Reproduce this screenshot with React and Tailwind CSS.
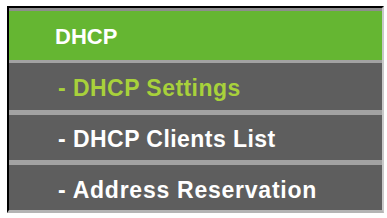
export default function App() {
  const font = { fontFamily: '"Liberation Sans", Arial, sans-serif' };
  return (
    <div className="w-[387px] h-[218px] bg-white pt-[6px] pl-[7px]">
      <div
        className="w-[377px] border-t-2 border-l-2 border-t-black border-l-black border-r-2 border-b-[3px] border-r-[#c8c8c8] border-b-[#b4b4b4] flex flex-col"
        style={font}
      >
        <div className="h-[52px] border-t-[3px] border-t-[#8e8e8e] bg-[#65b632] flex items-center pl-[46px] pt-[3px]">
          <span className="text-white font-bold text-[22px] leading-none">DHCP</span>
        </div>
        <div className="h-[50px] border-t-[3px] border-t-[#a2a2a2] bg-[#5e5e5e] flex items-center pl-[49px] pt-[4px]">
          <span className="font-bold text-[23px] leading-none tracking-[0.45px] text-[#a8d13b]">
            - DHCP Settings
          </span>
        </div>
        <div className="h-[50px] border-t-[5px] border-t-[#a2a2a2] bg-[#5e5e5e] flex items-center pl-[49px] pt-[4px]">
          <span className="font-bold text-[23px] leading-none tracking-[0.45px] text-white">
            - DHCP Clients List
          </span>
        </div>
        <div className="h-[50px] border-t-[5px] border-t-[#a2a2a2] bg-[#5e5e5e] flex items-center pl-[49px] pt-[5px]">
          <span className="font-bold text-[23px] leading-none tracking-[0.75px] text-white">
            - Address Reservation
          </span>
        </div>
      </div>
    </div>
  );
}
